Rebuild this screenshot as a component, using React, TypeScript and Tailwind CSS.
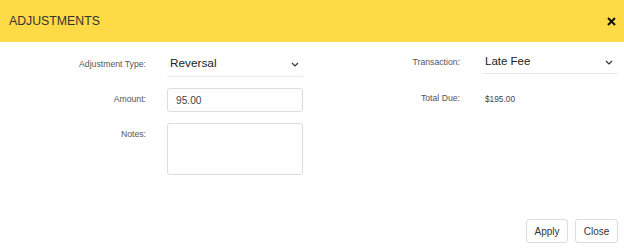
import { useState } from 'react';

const font = { fontFamily: '"Liberation Sans", Arial, sans-serif' };

const Chevron = () => (
  <svg width="8" height="5" viewBox="0 0 8 5" className="shrink-0">
    <path d="M1 1l3 3 3-3" fill="none" stroke="#333" strokeWidth="1.2" />
  </svg>
);

const AdjustmentsModal = () => {
  const [amount, setAmount] = useState('95.00');
  const [notes, setNotes] = useState('');

  return (
    <div className="w-[624px] h-[251px] bg-white flex flex-col" style={font}>
      {/* header */}
      <div className="h-[42px] bg-[#ffda47] flex items-center justify-between pl-[9px] pr-[8px]">
        <h2 className="text-[12.3px] text-[#333]">ADJUSTMENTS</h2>
        <button className="text-[#111]">
          <svg width="9" height="9" viewBox="0 0 9 9">
            <path d="M1 1l7 7M8 1L1 8" stroke="#111" strokeWidth="2" />
          </svg>
        </button>
      </div>

      <div className="flex flex-1">
        {/* left column */}
        <div className="flex flex-col pt-[10px]">
          <div className="flex items-center h-[25px]">
            <label className="w-[146px] text-right text-[8.7px] text-[#555]">Adjustment Type:</label>
            <div className="ml-[21px] w-[136px] h-[25px] flex items-center justify-between pl-[3px] pr-[4px] border-b border-[#e6eaf0]">
              <span className="text-[11.8px] text-[#222]">Reversal</span>
              <Chevron />
            </div>
          </div>
          <div className="flex items-center h-[24px] mt-[11px]">
            <label className="w-[146px] text-right text-[8.7px] text-[#555]">Amount:</label>
            <input
              value={amount}
              onChange={(e) => setAmount(e.target.value)}
              className="ml-[21px] w-[136px] h-[24px] border border-[#dcdcdc] rounded-[3px] px-[8px] text-[10.2px] text-[#444] outline-none"
            />
          </div>
          <div className="flex items-start mt-[11px]">
            <label className="w-[146px] text-right text-[8.7px] text-[#555] pt-[5px]">Notes:</label>
            <textarea
              value={notes}
              onChange={(e) => setNotes(e.target.value)}
              className="ml-[21px] w-[136px] h-[52px] border border-[#dcdcdc] rounded-[3px] resize-none outline-none"
            />
          </div>
        </div>

        {/* right column */}
        <div className="flex flex-col pt-[9px] ml-[17px]">
          <div className="flex items-center h-[23px]">
            <label className="w-[140px] text-right text-[8.7px] text-[#555]">Transaction:</label>
            <div className="ml-[22px] w-[136px] h-[23px] flex items-center justify-between pl-[3px] pr-[5px] border-b border-[#e6eaf0]">
              <span className="text-[11.5px] text-[#222]">Late Fee</span>
              <Chevron />
            </div>
          </div>
          <div className="flex items-center h-[24px] mt-[13px]">
            <label className="w-[140px] text-right text-[8.7px] text-[#555]">Total Due:</label>
            <span className="ml-[25px] text-[8.3px] text-[#444]">$195.00</span>
          </div>
        </div>
      </div>

      {/* footer */}
      <div className="flex justify-end gap-[7px] pr-[6px] pb-[8px]">
        <button className="w-[42px] h-[24px] border border-[#dcdcdc] rounded-[3px] text-[10px] text-[#333] bg-white">Apply</button>
        <button className="w-[43px] h-[24px] border border-[#dcdcdc] rounded-[3px] text-[10px] text-[#333] bg-white">Close</button>
      </div>
    </div>
  );
};

export default function App() {
  return <AdjustmentsModal />;
}
